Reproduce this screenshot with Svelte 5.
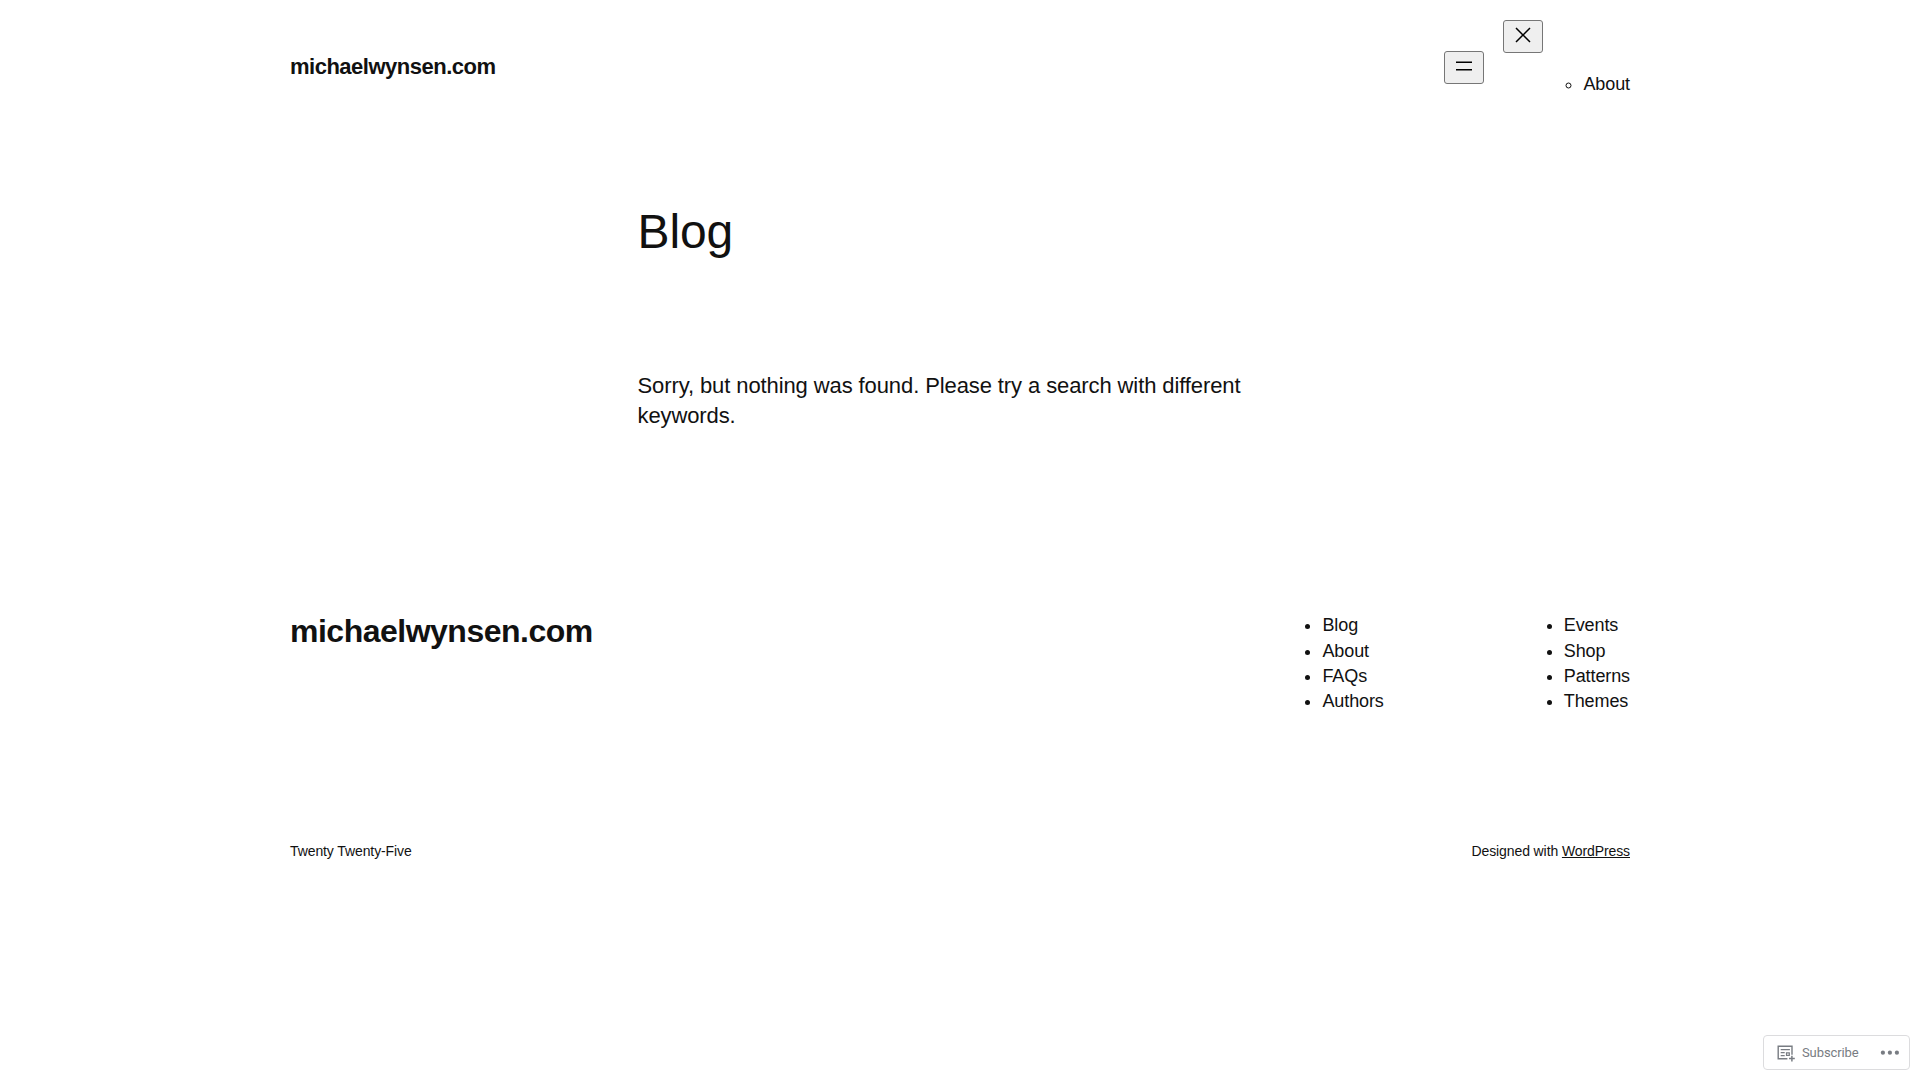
<script lang="ts">
	type NavLink = {
		href: string;
		label: string;
	};

	const siteTitle = 'michaelwynsen.com';

	const footerMenus: NavLink[][] = [
		[
			{ href: '#blog', label: 'Blog' },
			{ href: '#about', label: 'About' },
			{ href: '#faqs', label: 'FAQs' },
			{ href: '#authors', label: 'Authors' }
		],
		[
			{ href: '#events', label: 'Events' },
			{ href: '#shop', label: 'Shop' },
			{ href: '#patterns', label: 'Patterns' },
			{ href: '#themes', label: 'Themes' }
		]
	];
</script>

<div class="site">
	<header class="header wide">
		<p class="site-title"><a href="#home">{siteTitle}</a></p>
		<nav class="nav">
			<button class="nav-button" aria-label="Open menu">
				<svg width="24" height="24" viewBox="0 0 24 24" aria-hidden="true">
					<path d="M4 7.5h16v1.5H4z M4 15h16v1.5H4z" />
				</svg>
			</button>
			<div class="nav-content">
				<button class="nav-button" aria-label="Close menu">
					<svg width="24" height="24" viewBox="0 0 24 24" aria-hidden="true">
						<path
							d="m13.06 12 6.47-6.47-1.06-1.06L12 10.94 5.53 4.47 4.47 5.53 10.94 12l-6.47 6.47 1.06 1.06L12 13.06l6.47 6.47 1.06-1.06L13.06 12Z"
						/>
					</svg>
				</button>
				<ul class="pages">
					<li><a href="#about">About</a></li>
				</ul>
			</div>
		</nav>
	</header>

	<main class="main">
		<h1>Blog</h1>
		<p>Sorry, but nothing was found. Please try a search with different keywords.</p>
	</main>

	<footer class="footer wide">
		<div class="footer-top">
			<h2 class="footer-title"><a href="#home">{siteTitle}</a></h2>
			<div class="menus">
				{#each footerMenus as menu}
					<ul>
						{#each menu as link (link.href)}
							<li><a href={link.href}>{link.label}</a></li>
						{/each}
					</ul>
				{/each}
			</div>
		</div>
		<div class="credits">
			<p>Twenty Twenty-Five</p>
			<p>Designed with <a class="underlined" href="#wordpress">WordPress</a></p>
		</div>
	</footer>
</div>

<div class="actionbar">
	<a class="subscribe" href="#subscribe">
		<svg width="20" height="20" viewBox="0 0 20 20" fill="none" stroke="currentColor" aria-hidden="true">
			<path stroke-width="1.4" d="M11.4 15.7H2.2V3.2H16v8.6" />
			<path stroke-width="1.3" d="M4.7 6.6h9.2M4.7 9.7h4M4.7 12.7h4" />
			<path stroke-width="1.2" d="M10.5 9.8h2.8v2.6h-2.8z" />
			<path stroke-width="1.5" d="M15.9 12.7v5.8M13 15.6h5.8" />
		</svg>
		Subscribe
	</a>
	<button class="more" aria-label="More">
		<svg width="20" height="6" viewBox="0 0 20 6" fill="currentColor" aria-hidden="true">
			<circle cx="2.9" cy="2.7" r="2.1" />
			<circle cx="9.9" cy="2.7" r="2.1" />
			<circle cx="16.9" cy="2.7" r="2.1" />
		</svg>
	</button>
</div>

<style>
	:global(body) {
		background: #fff;
	}
	.site {
		font-family: 'Liberation Sans', Arial, sans-serif;
		font-size: 22px;
		line-height: 1.4;
		letter-spacing: -0.1px;
		color: #111;
	}
	.wide {
		max-width: 1340px;
		margin: 0 auto;
	}
	p,
	h1,
	h2,
	ul {
		margin: 0;
	}
	a {
		color: inherit;
		text-decoration: none;
	}

	.header {
		display: flex;
		justify-content: space-between;
		align-items: center;
		padding: 20px 0;
	}
	.site-title {
		font-weight: 700;
		letter-spacing: -0.5px;
	}
	.nav {
		display: flex;
		align-items: center;
		gap: 19px;
		font-size: 18px;
	}
	.nav-content {
		display: flex;
		align-items: flex-start;
	}
	.nav-button {
		display: block;
		width: 40px;
		height: 33px;
		padding: 2px 7px 5px;
		border: 1px solid #767676;
		border-radius: 3px;
		background: #efefef;
	}
	.nav-button svg {
		display: block;
	}
	.pages {
		margin: 52px 0 17.8px;
		padding-left: 40px;
		list-style: circle;
	}

	.main {
		max-width: 645px;
		margin: 0 auto;
		padding-top: 69.7px;
	}
	h1 {
		font-size: 48px;
		font-weight: 400;
		line-height: 1.125;
		margin-bottom: 112px;
	}

	.footer {
		padding-top: 181.1px;
	}
	.footer-top {
		display: flex;
		justify-content: space-between;
		align-items: flex-start;
	}
	.footer-title {
		font-size: 32px;
		font-weight: 700;
		line-height: 36px;
		letter-spacing: -0.5px;
	}
	.menus {
		display: flex;
		gap: 140px;
		font-size: 18px;
	}
	.menus ul {
		padding-left: 40px;
	}
	.credits {
		display: flex;
		justify-content: space-between;
		padding-top: 127.6px;
		font-size: 14px;
	}
	.underlined {
		text-decoration: underline;
	}

	.actionbar {
		position: fixed;
		right: 10px;
		bottom: 10px;
		display: flex;
		align-items: center;
		justify-content: space-between;
		box-sizing: border-box;
		width: 147px;
		height: 35px;
		padding: 0 9px 0 12px;
		border: 1px solid #dcdcde;
		border-radius: 4px;
		background: #fff;
		color: #787c82;
		font-family: Roboto, sans-serif;
		font-size: 13px;
		letter-spacing: -0.1px;
	}
	.subscribe {
		display: flex;
		align-items: center;
		gap: 6px;
	}
	.more {
		display: flex;
		padding: 0;
		border: 0;
		background: none;
		color: inherit;
	}
</style>
